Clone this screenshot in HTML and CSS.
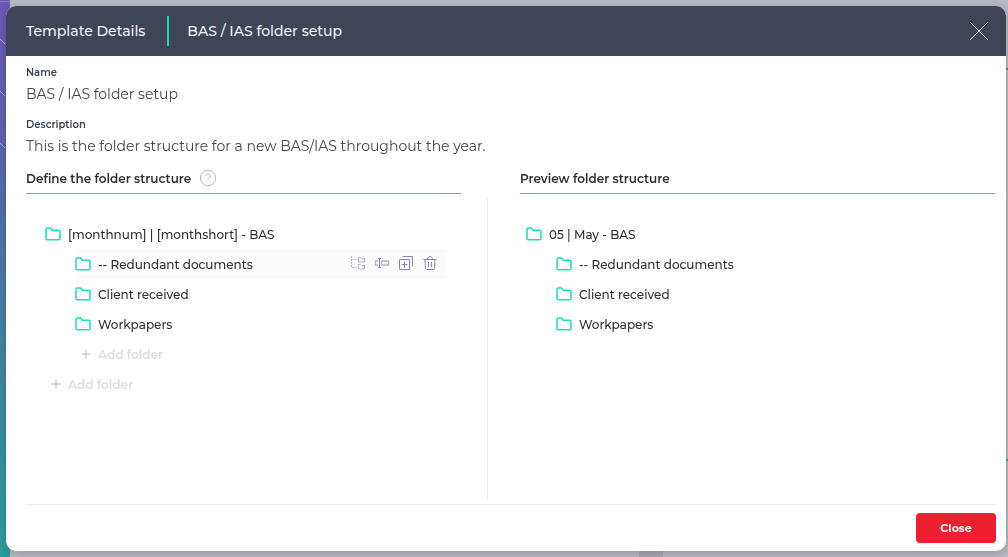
FILE: index.html
```html
<!DOCTYPE html>
<html lang="en">
<head>
    <meta charset="UTF-8">
    <meta name="viewport" content="width=device-width, initial-scale=1.0">
    <title>Template Details</title>
    <link rel="stylesheet" href="styles.css">
</head>
<body>
    <!-- Shared icons -->
    <svg class="sprite" aria-hidden="true">
        <symbol id="icon-folder" viewBox="0 0 16 14">
            <path d="M1 11.5v-9A1.5 1.5 0 0 1 2.500 1h3l1.800 2.200h6.200A1.500 1.500 0 0 1 15 4.700v6.800a1.300 1.300 0 0 1-1.300 1.300H2.300A1.300 1.300 0 0 1 1 11.500z"/>
        </symbol>
        <symbol id="icon-plus" viewBox="0 0 10 10">
            <path d="M5 0.500v9M0.500 5h9"/>
        </symbol>
    </svg>

    <!-- Page behind the dialog -->
    <div class="backdrop" aria-hidden="true">
        <div class="sidebar">
            <svg width="10" height="150" viewBox="0 0 10 150">
                <path d="M0 1.500h10" opacity="0.400"/>
                <path d="M0 39l5 5M0 91l5 5M0 143l5 5"/>
            </svg>
        </div>
        <div class="page">
            <span class="accent accent-top"></span>
            <span class="accent accent-bottom"></span>
            <span class="shade"></span>
        </div>
    </div>

    <div class="modal" role="dialog" aria-labelledby="modal-title">
        <header class="modal-header">
            <h1 id="modal-title">Template Details</h1>
            <span class="template-name">BAS / IAS folder setup</span>
            <button type="button" class="dismiss" aria-label="Dismiss">
                <svg width="20" height="20" viewBox="0 0 20 20"><path d="M1 1l18 18M19 1L1 19"/></svg>
            </button>
        </header>

        <main class="modal-body">
            <dl class="details">
                <dt>Name</dt>
                <dd>BAS / IAS folder setup</dd>
                <dt>Description</dt>
                <dd>This is the folder structure for a new BAS/IAS throughout the year.</dd>
            </dl>

            <div class="panels">
                <section class="panel">
                    <h2>
                        Define the folder structure
                        <button type="button" class="help" aria-label="Help">
                            <svg width="18" height="18" viewBox="0 0 18 18">
                                <circle cx="9" cy="9" r="7.700"/>
                                <path d="M6.700 7.100a2.300 2.300 0 1 1 3.500 2C9.300 9.600 9 10 9 11M9 12.500v1"/>
                            </svg>
                        </button>
                    </h2>
                    <ul class="tree">
                        <li>
                            <div class="row"><svg class="folder"><use href="#icon-folder"/></svg>[monthnum] | [monthshort] - BAS</div>
                            <ul>
                                <li>
                                    <div class="row active">
                                        <svg class="folder"><use href="#icon-folder"/></svg>-- Redundant documents
                                        <div class="actions">
                                            <button type="button" class="muted" aria-label="Add subfolder">
                                                <svg viewBox="0 0 16 16">
                                                    <path stroke-dasharray="2 1" d="M1.500 0v11.500h5M1.500 3.500h5"/>
                                                    <path d="M8.500 1.500h2l1 1h3v3.500h-6zM8.500 8.500h2l1 1h3V13h-6z"/>
                                                </svg>
                                            </button>
                                            <button type="button" aria-label="Rename">
                                                <svg viewBox="0 0 16 16">
                                                    <path d="M4 2.500h3M4 11.500h3M5.500 2.500v9"/>
                                                    <path opacity="0.600" stroke-width="1.500" d="M4 5H1.500v4H4M7.500 5h7v4h-7z"/>
                                                </svg>
                                            </button>
                                            <button type="button" aria-label="Duplicate">
                                                <svg viewBox="0 0 16 16">
                                                    <path d="M1.500 3.500h10v10h-10zM4.500 0.500h10v10M6.500 5.500v6M3.500 8.500h6"/>
                                                </svg>
                                            </button>
                                            <button type="button" aria-label="Delete">
                                                <svg viewBox="0 0 16 16">
                                                    <path d="M1.500 3.500h13M5.500 3.500c0-4 5-4 5 0M3 3.500l.500 9q0 1 1 1h7q1 0 1-1l.500-9M6.500 6v5M9.500 6v5"/>
                                                </svg>
                                            </button>
                                        </div>
                                    </div>
                                </li>
                                <li><div class="row"><svg class="folder"><use href="#icon-folder"/></svg>Client received</div></li>
                                <li><div class="row"><svg class="folder"><use href="#icon-folder"/></svg>Workpapers</div></li>
                                <li><button type="button" class="row add"><svg class="plus"><use href="#icon-plus"/></svg>Add folder</button></li>
                            </ul>
                        </li>
                        <li><button type="button" class="row add"><svg class="plus"><use href="#icon-plus"/></svg>Add folder</button></li>
                    </ul>
                </section>

                <div class="divider"></div>

                <section class="panel preview">
                    <h2>Preview folder structure</h2>
                    <ul class="tree">
                        <li>
                            <div class="row"><svg class="folder"><use href="#icon-folder"/></svg>05 | May - BAS</div>
                            <ul>
                                <li><div class="row"><svg class="folder"><use href="#icon-folder"/></svg>-- Redundant documents</div></li>
                                <li><div class="row"><svg class="folder"><use href="#icon-folder"/></svg>Client received</div></li>
                                <li><div class="row"><svg class="folder"><use href="#icon-folder"/></svg>Workpapers</div></li>
                            </ul>
                        </li>
                    </ul>
                </section>
            </div>
        </main>

        <footer class="modal-footer">
            <button type="button" class="close">Close</button>
        </footer>
    </div>
</body>
</html>
```
FILE: styles.css
```css
* {
    box-sizing: border-box;
}
body {
    margin: 0;
    min-height: 100vh;
    padding: 6px 2px 6px 6px;
    display: flex;
    font-family: Montserrat, Inter, sans-serif;
    font-size: 12px;
    color: #2c3038;
}
h1, h2, ul, dl, dd {
    margin: 0;
    padding: 0;
    font-weight: 400;
}
ul {
    list-style: none;
}
button {
    padding: 0;
    border: 0;
    background: none;
    font: inherit;
    cursor: pointer;
}
svg {
    display: block;
    fill: none;
    stroke: currentColor;
}
.sprite {
    position: absolute;
    width: 0;
    height: 0;
}

/* Page behind the dialog */
.backdrop {
    position: fixed;
    inset: 0;
    display: flex;
}
.sidebar {
    width: 10px;
    color: #aaa8c8;
    background: linear-gradient(#6c58b8, #5e62b0 25%, #457fa8 55%, #2c9c9c);
}
.page {
    position: relative;
    flex: 1;
    background: #b8b8c1;
}
.accent {
    position: absolute;
    right: 0;
    width: 2px;
    height: 2px;
    background: #10ae94;
}
.accent-top {
    top: 68px;
}
.accent-bottom {
    bottom: 96px;
}
.shade {
    position: absolute;
    left: 63%;
    bottom: 0;
    width: 24px;
    height: 6px;
    background: #a6a7ad;
}

/* Dialog */
.modal {
    position: relative;
    flex: 1;
    display: flex;
    flex-direction: column;
    background: #fff;
    border-radius: 10px;
    overflow: hidden;
    box-shadow: 0 2px 8px rgba(0, 0, 0, 0.2);
}
.modal-header {
    display: flex;
    align-items: center;
    height: 50px;
    padding: 0 17px 0 20px;
    background: #404459;
    color: #f0f0f4;
    font-size: 14px;
    font-weight: 500;
}
.modal-header h1 {
    font-size: 14px;
    font-weight: 500;
}
.template-name {
    margin-left: 22px;
    padding-left: 18px;
    border-left: 2px solid #0fdcb0;
    line-height: 30px;
}
.dismiss {
    margin-left: auto;
    color: #e4e4ea;
}
.modal-body {
    flex: 1;
    display: flex;
    flex-direction: column;
    padding: 10px 11px 5px 20px;
}
.details dt {
    font-size: 10px;
    font-weight: 600;
    line-height: 14px;
    color: #3c4454;
}
.details dd {
    margin: 4px 0 14px;
    font-size: 14px;
    line-height: 20px;
    color: #44474e;
}
.details dd:last-child {
    margin-bottom: 7px;
}
.panels {
    flex: 1;
    display: grid;
    grid-template-columns: 435fr 1px 481fr;
    column-gap: 26px;
}
.panel h2 {
    display: flex;
    align-items: center;
    gap: 8px;
    height: 31px;
    border-bottom: 1px solid #1fd0ac;
    font-size: 12px;
    font-weight: 600;
}
.preview {
    margin-left: 6px;
}
.help {
    color: #b5b3cd;
}
.divider {
    margin-top: 35px;
    background: #ececee;
}
.tree {
    padding: 25px 15px 0 19px;
}
.preview .tree {
    padding-left: 6px;
}
.tree ul {
    padding-left: 30px;
}
.row {
    display: flex;
    align-items: center;
    gap: 7px;
    width: 100%;
    height: 30px;
    font-weight: 500;
}
.row.active {
    background: #fbfbfc;
}
.folder {
    width: 16px;
    height: 14px;
    color: #16e0b8;
    stroke-width: 1.5;
}
.add {
    color: #dddde3;
    font-weight: 600;
}
.plus {
    width: 10px;
    height: 10px;
    margin-left: 6px;
    color: #b9b9c0;
}
.actions {
    display: flex;
    gap: 8px;
    margin-left: auto;
    margin-right: 8px;
    color: #8a87ae;
}
.actions svg {
    width: 16px;
    height: 16px;
}
.actions .muted {
    opacity: 0.6;
}
.actions button {
    color: inherit;
}
.modal-footer {
    display: flex;
    justify-content: flex-end;
    margin: 0 10px 0 20px;
    padding: 8px 0;
    border-top: 1px solid #ececee;
}
.close {
    width: 80px;
    height: 30px;
    border-radius: 4px;
    background: #ec202e;
    color: #fff;
    font-size: 11px;
    font-weight: 700;
}
```
